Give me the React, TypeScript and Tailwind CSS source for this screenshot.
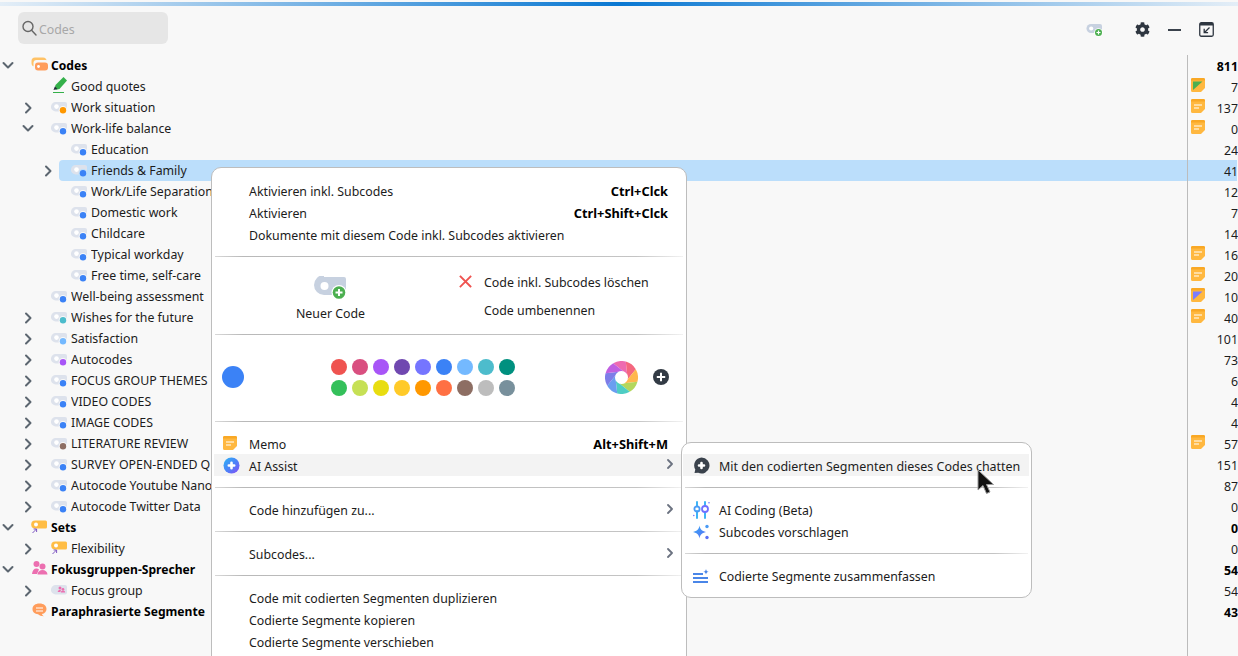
import React from "react";
import { FaCog } from "react-icons/fa";

type R = {
  name: string; lvl: 0 | 1 | 2; count: string; chev?: "r" | "d"; dot?: string;
  icon?: "codes" | "marker" | "sets" | "setsub" | "people" | "group" | "para";
  memo?: "plain" | "green" | "purple"; bold?: boolean; sel?: boolean;
};

const B = "#3b82f6";
const rows: R[] = [
  { name: "Codes", lvl: 0, count: "811", chev: "d", icon: "codes", bold: true },
  { name: "Good quotes", lvl: 1, count: "7", icon: "marker", memo: "green" },
  { name: "Work situation", lvl: 1, count: "137", chev: "r", dot: "#ff9800", memo: "plain" },
  { name: "Work-life balance", lvl: 1, count: "0", chev: "d", dot: B, memo: "plain" },
  { name: "Education", lvl: 2, count: "24", dot: B },
  { name: "Friends & Family", lvl: 2, count: "41", chev: "r", dot: B, sel: true },
  { name: "Work/Life Separation", lvl: 2, count: "12", dot: B },
  { name: "Domestic work", lvl: 2, count: "7", dot: B },
  { name: "Childcare", lvl: 2, count: "14", dot: B },
  { name: "Typical workday", lvl: 2, count: "16", dot: B, memo: "plain" },
  { name: "Free time, self-care", lvl: 2, count: "20", dot: B, memo: "plain" },
  { name: "Well-being assessment", lvl: 1, count: "10", dot: B, memo: "purple" },
  { name: "Wishes for the future", lvl: 1, count: "40", chev: "r", dot: "#4dbccc", memo: "plain" },
  { name: "Satisfaction", lvl: 1, count: "101", chev: "r", dot: "#74b9ff" },
  { name: "Autocodes", lvl: 1, count: "73", chev: "r", dot: "#a855f7" },
  { name: "FOCUS GROUP THEMES", lvl: 1, count: "6", chev: "r", dot: B },
  { name: "VIDEO CODES", lvl: 1, count: "4", chev: "r", dot: B },
  { name: "IMAGE CODES", lvl: 1, count: "4", chev: "r", dot: B },
  { name: "LITERATURE REVIEW", lvl: 1, count: "57", chev: "r", dot: "#8d6e63", memo: "plain" },
  { name: "SURVEY OPEN-ENDED Q", lvl: 1, count: "151", chev: "r", dot: B },
  { name: "Autocode Youtube Nano", lvl: 1, count: "87", chev: "r", dot: B },
  { name: "Autocode Twitter Data", lvl: 1, count: "0", chev: "r", dot: B },
  { name: "Sets", lvl: 0, count: "0", chev: "d", icon: "sets", bold: true },
  { name: "Flexibility", lvl: 1, count: "0", chev: "r", icon: "setsub" },
  { name: "Fokusgruppen-Sprecher", lvl: 0, count: "54", chev: "d", icon: "people", bold: true },
  { name: "Focus group", lvl: 1, count: "54", chev: "r", icon: "group" },
  { name: "Paraphrasierte Segmente", lvl: 0, count: "43", icon: "para", bold: true },
];

const swatches = ["#ef5350", "#d94f80", "#a855f7", "#7048b0", "#7575ff", "#3b82f6", "#74b9ff", "#4dbccc", "#00907f",
  "#34c05a", "#c6e055", "#e8dd10", "#ffca28", "#ff9800", "#ff7043", "#8d6e63", "#bdbdbd", "#78909c"];

function Chevron({ d }: { d: "r" | "d" }) {
  return (
    <svg width="12" height="12" viewBox="0 0 12 12" fill="none" stroke="#5c6670" strokeWidth="2" strokeLinecap="round" strokeLinejoin="round">
      {d === "r" ? <path d="M4 1.500 8.500 6 4 10.500" /> : <path d="M1.500 3 6 7.500 10.500 3" />}
    </svg>
  );
}

function Pill({ dot, halo, pill = "#dde2ec" }: { dot: string; halo: string; pill?: string }) {
  return (
    <svg width="17" height="21" viewBox="0 0 17 21" className="shrink-0">
      <path d="M4.700 5H14a2 2 0 0 1 2 2v5.500a2 2 0 0 1-2 2H4.700a4.750 4.750 0 0 1 0-9.500z" fill={pill} />
      <circle cx="5.500" cy="9.600" r="2.300" fill="#fff" />
      <circle cx="12" cy="13.200" r="4.300" fill={halo} />
      <circle cx="12" cy="13.200" r="3.200" fill={dot} />
    </svg>
  );
}

function TreeIcon({ k }: { k: NonNullable<R["icon"]> }) {
  const common = { width: 17, height: 21, viewBox: "0 0 17 21", className: "shrink-0" };
  if (k === "codes")
    return (
      <svg {...common}>
        <rect x="0.500" y="2.500" width="15" height="9" rx="3.500" fill="#ffc266" />
        <rect x="2.500" y="5" width="15" height="11.500" rx="3" fill="#f8f8f8" />
        <rect x="4" y="7.500" width="13" height="8" rx="3" fill="#ff9d5c" />
        <circle cx="7.500" cy="11.500" r="1.400" fill="#fff" />
      </svg>
    );
  if (k === "marker")
    return (
      <svg {...common}>
        <path d="M12.500 1l3.500 3.500-7.500 8.500-3.500.8-1.300-1.300.8-3.500z" fill="#34b04a" />
        <path d="M3.900 10.500l2.600 2.600-4 1z" fill="#1f2937" />
        <rect x="2" y="16" width="11" height="1" fill="#34b04a" />
      </svg>
    );
  if (k === "sets" || k === "setsub")
    return (
      <svg {...common}>
        <path d="M4.700 2.500H15a1.500 1.500 0 0 1 1.500 1.500v5a1.500 1.500 0 0 1-1.500 1.500H4.700a4 4 0 0 1 0-8z" fill="#ffbd45" transform="translate(-0.500 1)" />
        <circle cx="5" cy="7.500" r="2" fill="#fff" />
        <path d="M1.500 16l4-4M2.600 12h3v3" fill="none" stroke="#7e57c2" strokeWidth="1" />
      </svg>
    );
  if (k === "people")
    return (
      <svg {...common}>
        <circle cx="5.500" cy="5" r="3" fill="#ec6fb0" />
        <path d="M1 15c.3-3.500 2-5.500 4.500-5.500 1 0 1.800.3 2.500 1L6 15z" fill="#ec6fb0" />
        <circle cx="11.500" cy="7.500" r="3" fill="#ec6fb0" />
        <path d="M6.500 15.500c.3-3 2.300-4.500 5-4.500s4.700 1.500 5 4.500z" fill="#ec6fb0" />
      </svg>
    );
  if (k === "group")
    return (
      <svg {...common}>
        <path d="M4.700 5H14a2 2 0 0 1 2 2v5.500a2 2 0 0 1-2 2H4.700a4.750 4.750 0 0 1 0-9.500z" fill="#dde2ec" />
        <circle cx="9" cy="8" r="1.500" fill="#ec6fb0" />
        <path d="M6.700 12c.2-1.500 1-2 2.200-2 .500 0 .8.100 1.100.3L9.300 12z" fill="#ec6fb0" />
        <circle cx="12" cy="9.300" r="1.300" fill="#ec6fb0" />
        <path d="M9.800 12.500c.2-1.300 1-1.900 2.200-1.900s2 .6 2.200 1.900z" fill="#ec6fb0" />
      </svg>
    );
  return (
    <svg {...common}>
      <path d="M7.500 3c4.200 0 7 2.100 7 5.500 0 2.700-1.800 4.400-4.500 5.100.2 1 .8 1.500 1.800 2.200-2.400 0-4.600-.8-5.700-2-3.200-.3-5.600-2.100-5.600-5.300C.500 5.100 3.300 3 7.500 3z" fill="#ff9d5c" transform="translate(1 -0.500)" />
      <path d="M5 7h7M5 10h7" stroke="#fff" strokeWidth="1.200" />
    </svg>
  );
}

function Memo({ v = "plain" }: { v?: "plain" | "green" | "purple" }) {
  return (
    <svg width="14" height="14" viewBox="0 0 14 14" className="shrink-0">
      <path d="M1.500 0h11A1.500 1.500 0 0 1 14 1.500V10l-4 4H1.500A1.500 1.500 0 0 1 0 12.500v-11A1.500 1.500 0 0 1 1.500 0z" fill="#ffb840" />
      <path d="M1.500 0h11A1.500 1.500 0 0 1 14 1.500V2.500H0V1.500A1.500 1.500 0 0 1 1.500 0z" fill="#f9a825" />
      {v === "plain" && <path d="M3 6h8M3 9h5" stroke="#fff" strokeWidth="1.200" />}
      {v === "green" && <path d="M2 3.500h9.500L2 12z" fill="#4caf50" />}
      {v === "purple" && <path d="M2 3.500h9.500L2 12z" fill="#7c7cff" />}
    </svg>
  );
}

function TreeRow({ r }: { r: R }) {
  const box = r.lvl === 0 ? "w-[19px] pl-[2px]" : r.lvl === 1 ? "w-[39px] pl-[22px]" : "w-[59px] pl-[42px]";
  const halo = r.sel ? "#bbdefb" : "#f8f8f8";
  return (
    <div className="flex h-[21px] w-full">
      <div className={`${box} flex items-center shrink-0`}>{r.chev && <Chevron d={r.chev} />}</div>
      <div className={`flex flex-1 items-center pl-[12px] mr-[1px] ${r.sel ? "bg-[#bbdefb] rounded-l-[4px]" : ""}`}>
        {r.dot ? <Pill dot={r.dot} halo={halo} /> : <TreeIcon k={r.icon!} />}
        <span className={`ml-[3px] flex-1 whitespace-nowrap overflow-hidden pt-[2px] ${r.bold ? "font-bold text-black text-[12.1px]" : ""}`}>{r.name}</span>
        <div className="flex h-full w-[50px] shrink-0 border-l border-[#bcbcbc] pl-[3px]">
          {r.memo && <div className="mt-[2px]"><Memo v={r.memo} /></div>}
          <span className={`ml-auto -mr-[1px] leading-[23px] ${r.bold ? "font-bold text-black" : ""}`}>{r.count}</span>
        </div>
      </div>
    </div>
  );
}

function Divider({ className = "" }: { className?: string }) {
  return <div className={`h-px mx-[3px] bg-[linear-gradient(to_right,#d8d8d8,#b9b9b9_6%,#c4c4c4_90%,#f2f2f2)] ${className}`} />;
}

function SubChevron() {
  return (
    <svg width="6" height="10" viewBox="0 0 6 10" fill="none" stroke="#6b7280" strokeWidth="1.800" strokeLinecap="round" strokeLinejoin="round" className="absolute right-[11px] top-[5px]">
      <path d="M1 1l4 4-4 4" />
    </svg>
  );
}

function MenuRow({ label, shortcut, icon, hover, sub, low, inSub, wide }: { label: string; shortcut?: string; icon?: React.ReactNode; hover?: boolean; sub?: boolean; low?: boolean; inSub?: boolean; wide?: boolean }) {
  return (
    <div className={`relative flex h-[22px] items-center pr-[16px] ${inSub ? "pl-[10px] ml-[1px] mr-[2px]" : "pl-[9px] mx-[2px]"} ${hover ? "bg-[#f3f3f3]" : ""}`}>
      <div className="flex w-[26px] shrink-0 items-center">{icon}</div>
      <span className={`flex-1 whitespace-nowrap ${low ? "pt-[4px]" : "pt-[2px]"} ${wide ? "text-[12.47px]" : ""}`}>{label}</span>
      {shortcut && <span className={`font-bold text-black text-[12.8px] ${low ? "pt-[4px]" : "pt-[2px]"}`}>{shortcut}</span>}
      {sub && <SubChevron />}
    </div>
  );
}

function AiIcon() {
  return (
    <svg width="17" height="17" viewBox="0 0 17 17">
      <defs>
        <linearGradient id="ai" x1="0" y1="0" x2="1" y2="1">
          <stop offset="0" stopColor="#2ab4f5" />
          <stop offset="0.55" stopColor="#4f7ff8" />
          <stop offset="1" stopColor="#8a4cf5" />
        </linearGradient>
      </defs>
      <circle cx="8.500" cy="8.500" r="8" fill="url(#ai)" />
      <path d="M8.500 5.800v5.400M5.800 8.500h5.400" stroke="#fff" strokeWidth="2.600" strokeLinecap="round" />
    </svg>
  );
}

function ChatIcon() {
  return (
    <svg width="17" height="17" viewBox="0 0 17 17">
      <path d="M8.500.500a8 8 0 1 1-3.300 15.300L1.500 16l.8-3.400A8 8 0 0 1 8.500.500z" fill="#3a424c" />
      <path d="M8.500 6v5M6 8.500h5" stroke="#fff" strokeWidth="2.600" strokeLinecap="round" />
    </svg>
  );
}

function AiCodingIcon() {
  return (
    <svg width="17" height="18" viewBox="0 0 17 18" fill="none">
      <path d="M4 1v4.500M4 10v7M12 1v3M12 11.500v5.500" stroke="#3fb4f5" strokeWidth="2" strokeLinecap="round" />
      <circle cx="4" cy="8" r="2.600" stroke="#4a9bf5" strokeWidth="1.800" />
      <circle cx="12" cy="8" r="3" stroke="#7070ff" strokeWidth="1.800" />
      <circle cx="0.800" cy="14.500" r=".8" fill="#7575ff" />
      <circle cx="16" cy="1.800" r=".8" fill="#7575ff" />
    </svg>
  );
}

function SparkIcon() {
  return (
    <svg width="17" height="17" viewBox="0 0 17 17">
      <defs>
        <linearGradient id="sp" x1="0" y1="0" x2="1" y2="1">
          <stop offset="0" stopColor="#36a8f5" />
          <stop offset="1" stopColor="#5a6ff5" />
        </linearGradient>
      </defs>
      <path d="M6.500 1.500c.8 4 2 5.300 6.500 6.500-4.500 1.200-5.700 2.500-6.500 6.500-.8-4-2-5.300-6.500-6.500 4.500-1.200 5.700-2.500 6.500-6.500z" fill="url(#sp)" />
      <circle cx="14" cy="2.500" r="1.700" fill="#4a9bf5" />
      <circle cx="14" cy="13.500" r="1.700" fill="#5a6ff5" />
    </svg>
  );
}

function SummarizeIcon() {
  return (
    <svg width="17" height="15" viewBox="0 0 17 15">
      <path d="M0 5h10M0 9h15M0 13h15" stroke="#4a86e8" strokeWidth="2" />
      <path d="M13 0c.3 1.700 1 2.400 2.800 2.800-1.800.4-2.500 1.100-2.800 2.800-.3-1.700-1-2.400-2.800-2.800C12 2.400 12.700 1.700 13 0z" fill="#4a86e8" />
    </svg>
  );
}

function Wheel() {
  const cols = ["#ee6bb0", "#f4677f", "#ffb74d", "#b3d75c", "#4ecdc4", "#6a9ef0", "#7d7de8", "#c060e0"];
  const R0 = 16.500, c = 16.500, r0 = 6;
  const pt = (deg: number, r: number) => {
    const a = (deg * Math.PI) / 180;
    return `${(c + r * Math.sin(a)).toFixed(2)} ${(c - r * Math.cos(a)).toFixed(2)}`;
  };
  return (
    <svg width="33" height="33" viewBox="0 0 33 33" className="shrink-0">
      {cols.map((col, i) => {
        const s = -30 + i * 45;
        return <path key={col} d={`M${pt(s + 70, r0)}L${pt(s, R0)}A${R0} ${R0} 0 0 1 ${pt(s + 45, R0)}L${pt(s + 115, r0)}Z`} fill={col} />;
      })}
      <circle cx={c} cy={c} r="6.500" fill="#fff" />
    </svg>
  );
}

function PlusDark() {
  return (
    <svg width="16" height="16" viewBox="0 0 16 16" className="shrink-0">
      <circle cx="8" cy="8" r="8" fill="#333b45" />
      <path d="M8 3.800v8.400M3.800 8h8.400" stroke="#fff" strokeWidth="2" />
    </svg>
  );
}

function NewCode({ large }: { large?: boolean }) {
  if (large)
    return (
      <svg width="33" height="24" viewBox="0 0 33 24">
        <path d="M10 0h20a2 2 0 0 1 2 2v14a2 2 0 0 1-2 2H10a10 10 0 0 1 0-20z" fill="#c7d1e0" transform="translate(0 1)" />
        <circle cx="10.500" cy="10" r="4" fill="#fff" />
        <circle cx="25" cy="16.500" r="7.500" fill="#fff" />
        <circle cx="25" cy="16.500" r="6.300" fill="#4caf50" />
        <path d="M25 13v7M21.500 16.500h7" stroke="#fff" strokeWidth="2" />
      </svg>
    );
  return (
    <svg width="17" height="14" viewBox="0 0 17 14">
      <path d="M5 1h9a2 2 0 0 1 2 2v5a2 2 0 0 1-2 2H5A4.500 4.500 0 0 1 5 1z" fill="#c7d1e0" />
      <circle cx="5.200" cy="5.500" r="2.100" fill="#fff" />
      <circle cx="12.500" cy="9.500" r="4.300" fill="#fff" />
      <circle cx="12.500" cy="9.500" r="3.500" fill="#4caf50" />
      <path d="M12.500 7.500v4M10.500 9.500h4" stroke="#fff" strokeWidth="1.200" />
    </svg>
  );
}

export default function App() {
  return (
    <div className="relative flex h-[656px] w-[1238px] flex-col overflow-hidden bg-[#f8f8f8] font-['Noto_Sans',sans-serif] text-[12.35px] text-[#1c1c1c]">
      <div className="mt-[2px] h-[4px] shrink-0 bg-[linear-gradient(to_right,#e4eef7,#0a78d2_50%,#e4eef7)]" />

      <div className="flex h-[49px] shrink-0 items-start pl-[18px]">
        <div className="mt-[6px] flex h-[32px] w-[150px] items-center rounded-[6px] bg-[#e6e6e6] pl-[4px] text-[#a8a8a8]">
          <svg width="15" height="16" viewBox="0 0 15 16" fill="none" stroke="#666" strokeWidth="1.400" strokeLinecap="round">
            <circle cx="6" cy="6.500" r="5" />
            <path d="M9.800 10.500 14 15" />
          </svg>
          <span className="ml-[2px] pt-[4px]">Codes</span>
        </div>
        <div className="ml-auto mt-[16px] flex items-center pr-[24px]">
          <NewCode />
          <FaCog className="ml-[32px] text-[15px] text-[#2e3640]" />
          <div className="ml-[18px] h-[2px] w-[13px] bg-[#3a424c]" />
          <svg width="15" height="15" viewBox="0 0 15 15" fill="none" className="ml-[18px]">
            <rect x="0.750" y="0.750" width="13.500" height="13.500" rx="1.500" stroke="#2e3640" strokeWidth="1.300" />
            <rect x="1" y="1" width="13" height="2.500" fill="#2e3640" />
            <path d="M10.500 5.500l-5 5M5.200 6.800v3.900h3.900" stroke="#2e3640" strokeWidth="1.300" />
          </svg>
        </div>
      </div>

      <div className="flex flex-1 flex-col">
        {rows.map((r) => <TreeRow key={r.name} r={r} />)}
        <div className="ml-auto mr-[1px] w-[50px] flex-1 border-l border-[#bcbcbc]" />
      </div>

      <div className="absolute left-[211px] top-[167px] h-[520px] w-[476px] rounded-[10px] border border-[#bdbdbd] bg-white">
        <div className="pb-[10px] pt-[12px]">
          <MenuRow label="Aktivieren inkl. Subcodes" shortcut="Ctrl+Clck" />
          <MenuRow label="Aktivieren" shortcut="Ctrl+Shift+Clck" />
          <MenuRow label="Dokumente mit diesem Code inkl. Subcodes aktivieren" />
        </div>
        <Divider />
        <div className="flex h-[77px]">
          <div className="flex w-[237px] flex-col items-center pt-[19px]">
            <NewCode large />
            <span className="mt-[5px]">Neuer Code</span>
          </div>
          <div className="flex flex-col pt-[11px]">
            <div className="flex h-[28px] items-center">
              <svg width="13" height="13" viewBox="0 0 13 13" className="ml-[10px] mb-[2px]" stroke="#ef5350" strokeWidth="1.800" strokeLinecap="square">
                <path d="M1.500 1.500l10 10M11.500 1.500l-10 10" />
              </svg>
              <span className="ml-[12px] pt-[2px] text-[12.42px]">Code inkl. Subcodes löschen</span>
            </div>
            <div className="flex h-[28px] items-center pl-[35px] pt-[2px]">Code umbenennen</div>
          </div>
        </div>
        <Divider />
        <div className="flex h-[86px] items-center pb-[2px] pl-[10px]">
          <div className="h-[22px] w-[22px] shrink-0 rounded-full bg-[#3b82f6]" />
          <div className="ml-[87px] grid w-[184px] grid-cols-9 gap-[5px]">
            {swatches.map((c) => (
              <svg key={c} width="16" height="16" viewBox="0 0 16 16"><circle cx="8" cy="8" r="8" fill={c} /></svg>
            ))}
          </div>
          <div className="ml-[90px]"><Wheel /></div>
          <div className="ml-[15px]"><PlusDark /></div>
        </div>
        <Divider />
        <div className="pb-[11px] pt-[10px]">
          <MenuRow label="Memo" shortcut="Alt+Shift+M" icon={<Memo />} low />
          <MenuRow label="AI Assist" icon={<AiIcon />} hover sub low />
        </div>
        <Divider />
        <div className="pb-[10px] pt-[11px]">
          <MenuRow label="Code hinzufügen zu..." sub />
        </div>
        <Divider />
        <div className="pb-[10px] pt-[11px]">
          <MenuRow label="Subcodes..." sub />
        </div>
        <Divider />
        <div className="pt-[11px]">
          <MenuRow label="Code mit codierten Segmenten duplizieren" />
          <MenuRow label="Codierte Segmente kopieren" />
          <MenuRow label="Codierte Segmente verschieben" />
        </div>
      </div>

      <div className="absolute left-[681px] top-[442px] h-[156px] w-[351px] rounded-[10px] border border-[#bdbdbd] bg-white">
        <div className="pb-[11px] pt-[11px]">
          <MenuRow label="Mit den codierten Segmenten dieses Codes chatten" icon={<ChatIcon />} hover low inSub wide />
        </div>
        <Divider />
        <div className="pb-[10px] pt-[11px]">
          <MenuRow label="AI Coding (Beta)" icon={<AiCodingIcon />} inSub />
          <MenuRow label="Subcodes vorschlagen" icon={<SparkIcon />} inSub />
        </div>
        <Divider />
        <div className="pt-[11px]">
          <MenuRow label="Codierte Segmente zusammenfassen" icon={<SummarizeIcon />} inSub />
        </div>
      </div>

      <svg width="19" height="27" viewBox="0 0 19 27" className="absolute left-[977px] top-[469px]">
        <path d="M1 1v20l5-4.500 3.500 8 3.500-1.500-3.500-7.500h7z" fill="#111" stroke="#9a9a9a" strokeWidth="1" />
      </svg>
    </div>
  );
}
